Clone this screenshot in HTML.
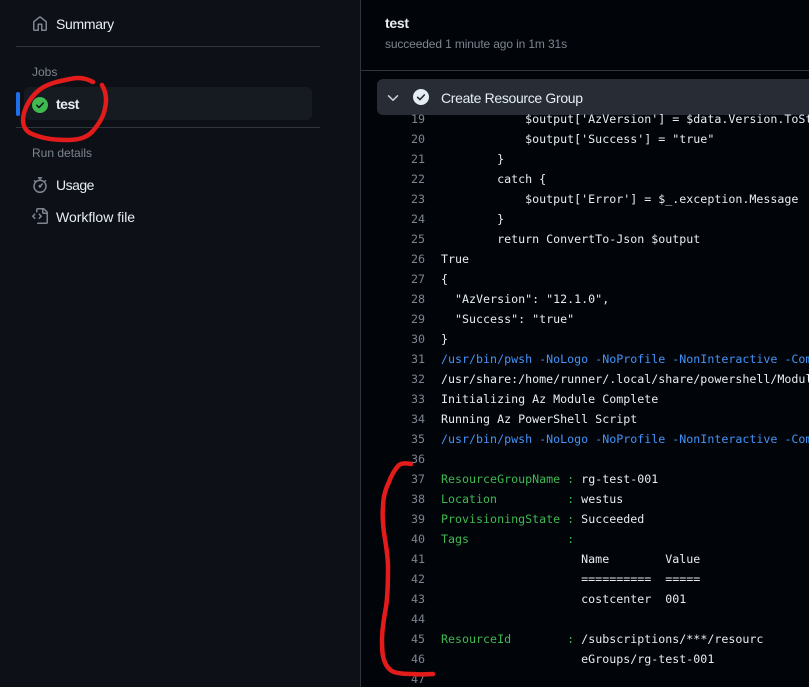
<!DOCTYPE html>
<html><head><meta charset="utf-8">
<style>
html,body{margin:0;padding:0;background:#010409;overflow:hidden}
body{width:809px;height:687px}
#w{width:809px;height:687px;overflow:hidden;position:relative;font-family:"Liberation Sans",sans-serif}
.side{position:absolute;left:0;top:0;width:360px;height:687px;background:#0d1117;border-right:1px solid #30363d}
.abs{position:absolute;white-space:pre}
.nav{color:#e6edf3;font-size:14px;line-height:20px;left:56px}
.lab{color:#7d8590;font-size:12px;line-height:16px;left:32px}
.hr{position:absolute;left:16px;width:304px;height:1px;background:#30363d}
.ln{position:absolute;left:400px;width:25px;text-align:right;color:#7d8590;font:11.65px/20px "DejaVu Sans Mono",monospace;white-space:pre}
.c{position:absolute;left:441px;width:368px;height:20px;overflow:hidden;color:#e6edf3;font:11.65px/20px "DejaVu Sans Mono",monospace;white-space:pre}
.b{color:#4493f8}.g{color:#3fb950}
svg{position:absolute}
</style></head><body><div id="w">
<div class="side"></div>
<svg style="left:32px;top:16px" width="16" height="16" viewBox="0 0 16 16" fill="#7d8590"><path d="M6.906.664a1.749 1.749 0 0 1 2.187 0l5.25 4.2c.415.332.657.835.657 1.367v7.019A1.75 1.75 0 0 1 13.25 15h-3.5a.75.75 0 0 1-.75-.75V9H7v5.25a.75.75 0 0 1-.75.75h-3.5A1.75 1.75 0 0 1 1 13.25V6.23c0-.531.242-1.034.657-1.366l5.25-4.2Zm1.25 1.171a.25.25 0 0 0-.312 0l-5.25 4.2a.25.25 0 0 0-.094.196v7.019c0 .138.112.25.25.25H5.5V8.25a.75.75 0 0 1 .75-.75h3.5a.75.75 0 0 1 .75.75v5.25h2.75a.25.25 0 0 0 .25-.25V6.23a.25.25 0 0 0-.094-.195Z"/></svg>
<div class="abs nav" style="top:14px;letter-spacing:-.3px">Summary</div>
<div class="hr" style="top:46px"></div>
<div class="abs lab" style="top:64px">Jobs</div>
<div class="abs" style="left:24px;top:87px;width:288px;height:33px;background:#161b22;border-radius:6px"></div>
<div class="abs" style="left:16px;top:92px;width:4px;height:24px;background:#1f6feb;border-radius:2px"></div>
<svg style="left:32px;top:97px" width="16" height="16" viewBox="0 0 16 16"><circle cx="8" cy="8" r="8" fill="#3fb950"/><path d="M4.8 8.3l2.2 2.2 4.2-4.4" fill="none" stroke="#0d1117" stroke-width="1.5" stroke-linecap="round" stroke-linejoin="round"/></svg>
<div class="abs nav" style="top:94px;font-weight:bold;letter-spacing:-.5px">test</div>
<div class="hr" style="top:127px"></div>
<div class="abs lab" style="top:145px">Run details</div>
<svg style="left:32px;top:177px" width="16" height="16" viewBox="0 0 16 16" fill="#7d8590"><path d="M5.75.75A.75.75 0 0 1 6.5 0h3a.75.75 0 0 1 0 1.5h-.75v1l-.001.041a6.724 6.724 0 0 1 3.464 1.435l.007-.006.75-.75a.75.75 0 1 1 1.06 1.06l-.75.75-.006.007a6.75 6.75 0 1 1-10.548 0L2.72 5.03l-.75-.75a.75.75 0 0 1 1.06-1.06l.75.75.007.006A6.72 6.72 0 0 1 7.25 2.541V1.5H6.5a.75.75 0 0 1-.75-.75ZM8 14.5a5.25 5.25 0 1 0-.001-10.501A5.25 5.25 0 0 0 8 14.5Zm.389-6.7 1.33-1.33a.75.75 0 1 1 1.061 1.06L9.45 8.861A1.503 1.503 0 0 1 8 10.75a1.499 1.499 0 1 1 .389-2.95Z"/></svg>
<div class="abs nav" style="top:175px;letter-spacing:-.5px">Usage</div>
<svg style="left:32px;top:208px" width="16" height="16" viewBox="0 0 16 16" fill="#7d8590"><path d="M4 1.75C4 .784 4.784 0 5.75 0h5.586c.464 0 .909.184 1.237.513l2.914 2.914c.329.328.513.773.513 1.237v9.586A1.75 1.75 0 0 1 14.25 16h-8.5a.75.75 0 0 1 0-1.5h8.5a.25.25 0 0 0 .25-.25V6h-2.75A1.75 1.75 0 0 1 10 4.25V1.5H5.75a.25.25 0 0 0-.25.25v2a.75.75 0 0 1-1.5 0Zm-4 6.5c0-.199.079-.39.22-.53l2-2a.75.75 0 1 1 1.06 1.06L1.81 8.25l1.47 1.47a.75.75 0 1 1-1.06 1.06l-2-2a.75.75 0 0 1-.22-.53Zm7.78-2.53 2 2a.75.75 0 0 1 0 1.06l-2 2a.75.75 0 1 1-1.06-1.06l1.47-1.47-1.47-1.47a.75.75 0 1 1 1.06-1.06ZM11.5 1.5v2.75c0 .138.112.25.25.25h2.75Z"/></svg>
<div class="abs nav" style="top:207px">Workflow file</div>

<div class="abs" style="left:385px;top:13px;color:#e6edf3;font-size:14px;line-height:20px;font-weight:bold;letter-spacing:-.3px">test</div>
<div class="abs" style="left:385px;top:36px;color:#7d8590;font-size:12px;line-height:16px;letter-spacing:-.13px">succeeded 1 minute ago in 1m 31s</div>
<div class="abs" style="left:361px;top:70px;width:448px;height:1px;background:#30363d"></div>
<div class="abs" style="left:377px;top:79px;width:432px;height:36px;background:#272c35;border-radius:6px 0 0 6px"></div>
<svg style="left:385px;top:90px" width="16" height="16" viewBox="0 0 16 16" fill="none"><path d="M3.5 5.8L8 10.2l4.5-4.4" stroke="#c9d1d9" stroke-width="1.5" stroke-linecap="round" stroke-linejoin="round"/></svg>
<svg style="left:413px;top:89px" width="16" height="16" viewBox="0 0 16 16"><circle cx="8" cy="8" r="8" fill="#e6edf3"/><path d="M4.6 8.3l2.3 2.3 4.4-4.6" fill="none" stroke="#272c35" stroke-width="1.6" stroke-linecap="round" stroke-linejoin="round"/></svg>
<div class="abs" style="left:441px;top:88px;color:#e6edf3;font-size:14px;line-height:20px;letter-spacing:-.33px">Create Resource Group</div>

<div class="ln" style="top:109px">19</div><div class="c" style="top:109px">            $output['AzVersion'] = $data.Version.ToString()</div>
<div class="ln" style="top:129px">20</div><div class="c" style="top:129px">            $output['Success'] = "true"</div>
<div class="ln" style="top:149px">21</div><div class="c" style="top:149px">        }</div>
<div class="ln" style="top:169px">22</div><div class="c" style="top:169px">        catch {</div>
<div class="ln" style="top:189px">23</div><div class="c" style="top:189px">            $output['Error'] = $_.exception.Message</div>
<div class="ln" style="top:209px">24</div><div class="c" style="top:209px">        }</div>
<div class="ln" style="top:229px">25</div><div class="c" style="top:229px">        return ConvertTo-Json $output</div>
<div class="ln" style="top:249px">26</div><div class="c" style="top:249px">True</div>
<div class="ln" style="top:269px">27</div><div class="c" style="top:269px">{</div>
<div class="ln" style="top:289px">28</div><div class="c" style="top:289px">  "AzVersion": "12.1.0",</div>
<div class="ln" style="top:309px">29</div><div class="c" style="top:309px">  "Success": "true"</div>
<div class="ln" style="top:329px">30</div><div class="c" style="top:329px">}</div>
<div class="ln" style="top:349px">31</div><div class="c b" style="top:349px">/usr/bin/pwsh -NoLogo -NoProfile -NonInteractive -Command</div>
<div class="ln" style="top:369px">32</div><div class="c" style="top:369px">/usr/share:/home/runner/.local/share/powershell/Modules</div>
<div class="ln" style="top:389px">33</div><div class="c" style="top:389px">Initializing Az Module Complete</div>
<div class="ln" style="top:409px">34</div><div class="c" style="top:409px">Running Az PowerShell Script</div>
<div class="ln" style="top:429px">35</div><div class="c b" style="top:429px">/usr/bin/pwsh -NoLogo -NoProfile -NonInteractive -Command</div>
<div class="ln" style="top:449px">36</div>
<div class="ln" style="top:469px">37</div><div class="c" style="top:469px"><span class="g">ResourceGroupName :</span> rg-test-001</div>
<div class="ln" style="top:489px">38</div><div class="c" style="top:489px"><span class="g">Location          :</span> westus</div>
<div class="ln" style="top:509px">39</div><div class="c" style="top:509px"><span class="g">ProvisioningState :</span> Succeeded</div>
<div class="ln" style="top:529px">40</div><div class="c" style="top:529px"><span class="g">Tags              :</span></div>
<div class="ln" style="top:549px">41</div><div class="c" style="top:549px">                    Name        Value</div>
<div class="ln" style="top:569px">42</div><div class="c" style="top:569px">                    ==========  =====</div>
<div class="ln" style="top:589px">43</div><div class="c" style="top:589px">                    costcenter  001</div>
<div class="ln" style="top:609px">44</div>
<div class="ln" style="top:629px">45</div><div class="c" style="top:629px"><span class="g">ResourceId        :</span> /subscriptions/***/resourc</div>
<div class="ln" style="top:649px">46</div><div class="c" style="top:649px">                    eGroups/rg-test-001</div>
<div class="ln" style="top:669px">47</div>

<svg style="left:0;top:0" width="809" height="687" viewBox="0 0 809 687" fill="none" stroke="#e31b1b" stroke-linecap="round" stroke-linejoin="round" stroke-width="4.5">
<path d="M93 82C86 78 78 77 70 79C60 81 50 83 42 88C33 94 27 103 24 113C22 121 23 129 30 133C40 138 52 140 67 140C78 140 86 138 92 132C99 124 104 116 105 108C107 100 106 92 102 85"/>
<path d="M411 464C406 463 402 463 399 465C395 469 391 476 389 482C385 490 383 498 383 507C382 516 383 525 384 533C386 545 388 556 388 567C388 580 388 594 386 607C384 618 382 629 382 640C382 647 382 654 384 660C386 666 389 670 394 672C400 674 407 674 413 674C420 675 427 674 433 674"/>
</svg>
</div></body></html>
